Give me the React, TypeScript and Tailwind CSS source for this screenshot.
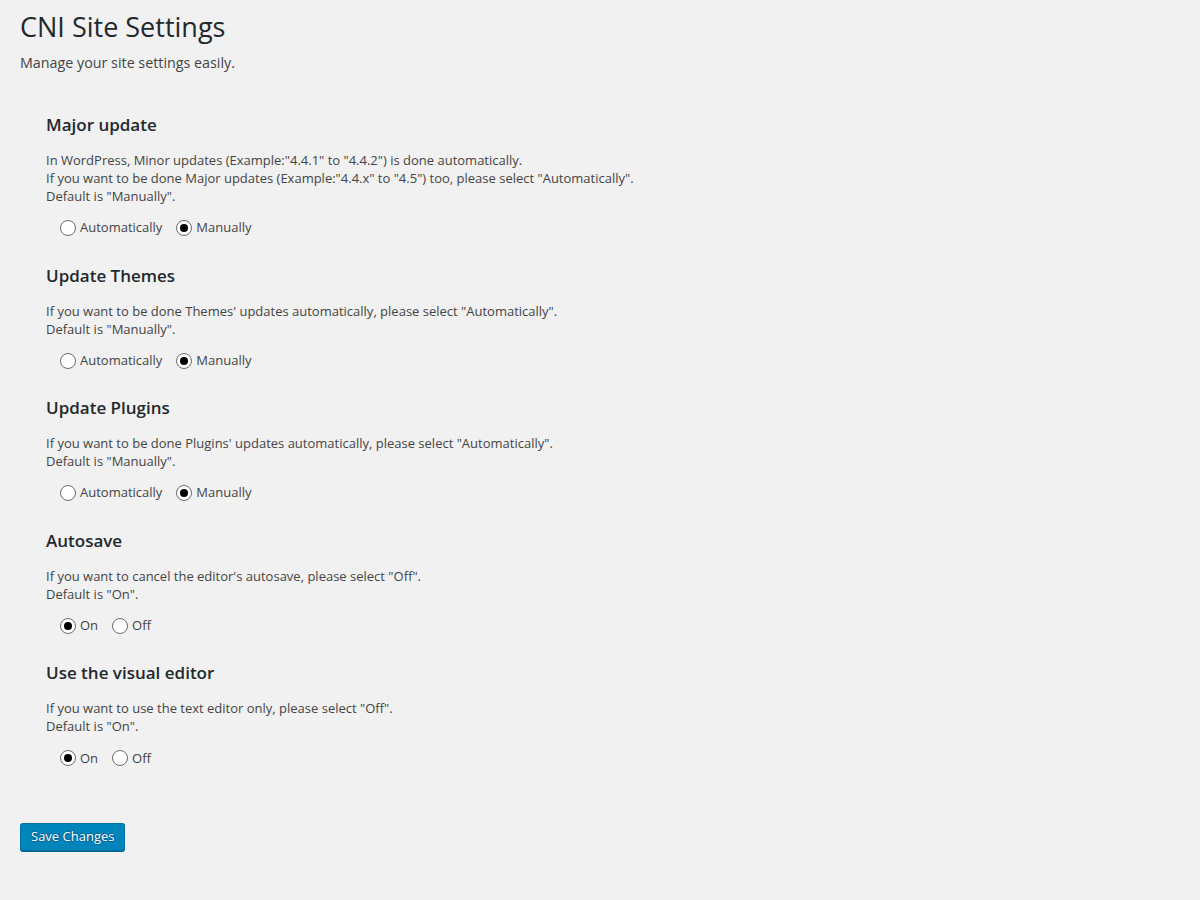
const sections = [
  {
    title: "Major update",
    lines: [
      'In WordPress, Minor updates (Example:"4.4.1" to "4.4.2") is done automatically.',
      'If you want to be done Major updates (Example:"4.4.x" to "4.5") too, please select "Automatically".',
      'Default is "Manually".',
    ],
    options: ["Automatically", "Manually"],
    selected: "Manually",
  },
  {
    title: "Update Themes",
    lines: [
      'If you want to be done Themes\' updates automatically, please select "Automatically".',
      'Default is "Manually".',
    ],
    options: ["Automatically", "Manually"],
    selected: "Manually",
  },
  {
    title: "Update Plugins",
    lines: [
      'If you want to be done Plugins\' updates automatically, please select "Automatically".',
      'Default is "Manually".',
    ],
    options: ["Automatically", "Manually"],
    selected: "Manually",
  },
  {
    title: "Autosave",
    lines: [
      'If you want to cancel the editor\'s autosave, please select "Off".',
      'Default is "On".',
    ],
    options: ["On", "Off"],
    selected: "On",
  },
  {
    title: "Use the visual editor",
    lines: [
      'If you want to use the text editor only, please select "Off".',
      'Default is "On".',
    ],
    options: ["On", "Off"],
    selected: "On",
  },
];

function Radio({ label, checked }: { label: string; checked: boolean }) {
  return (
    <label className="flex items-center gap-[4px] cursor-pointer">
      <span className="flex h-[16px] w-[16px] items-center justify-center rounded-full border border-[#6b6b6b] bg-white">
        {checked && <span className="h-[8px] w-[8px] rounded-full bg-black" />}
      </span>
      <span>{label}</span>
    </label>
  );
}

export default function App() {
  return (
    <div
      className="min-h-[900px] bg-[#f1f1f1] px-5 pt-[11px] pb-10 text-[13px] text-[#444]"
      style={{ fontFamily: '"Open Sans", sans-serif' }}
    >
      <h1 className="text-[27px] leading-[32px] font-normal text-[#23282d]">
        CNI Site Settings
      </h1>
      <p className="mt-[11px] text-[14.3px] leading-[18px] text-[#444]">
        Manage your site settings easily.
      </p>

      <div className="mt-[41px] pl-[26px]">
        {sections.map((s) => (
          <section key={s.title} className="mb-[25.6px]">
            <h2 className="text-[17px] leading-[24px] font-semibold text-[#23282d]">
              {s.title}
            </h2>
            <div className="mt-[14px] leading-[18px]">
              {s.lines.map((l) => (
                <p key={l}>{l}</p>
              ))}
            </div>
            <div className="mt-[13px] flex h-[20px] items-center gap-[14px] pl-[14px]">
              {s.options.map((o) => (
                <Radio key={o} label={o} checked={o === s.selected} />
              ))}
            </div>
          </section>
        ))}
      </div>

      <button className="mt-[29px] h-[28px] rounded-[3px] border border-[#0073aa] border-b-[#006799] bg-[#0085ba] px-[10px] pb-[1px] text-[13px] text-white shadow-[0_1px_0_#006799] [text-shadow:0_-1px_1px_#006799,1px_0_1px_#006799,0_1px_1px_#006799,-1px_0_1px_#006799]">
        Save Changes
      </button>
    </div>
  );
}
